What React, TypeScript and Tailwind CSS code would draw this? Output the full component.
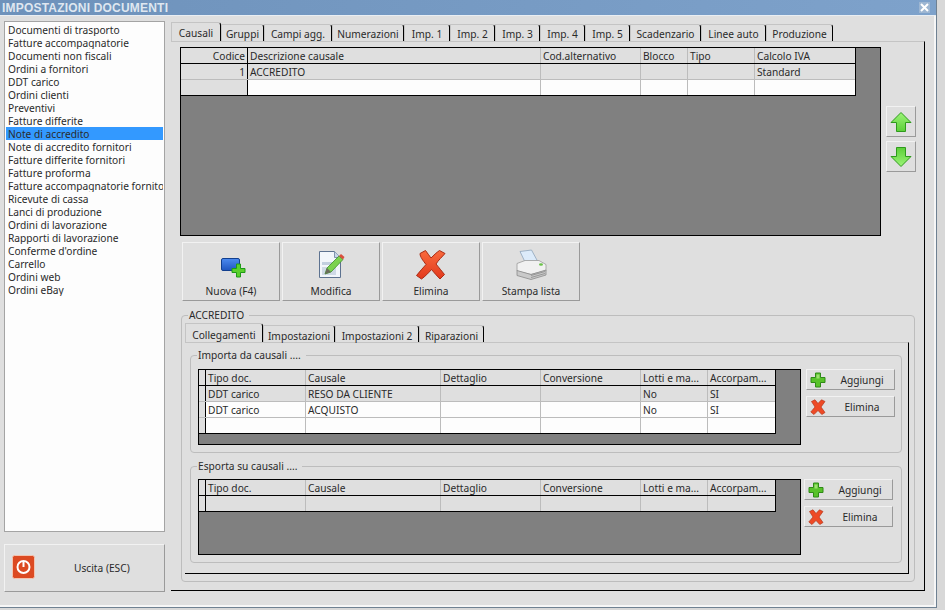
const font = "font-['Noto_Sans',sans-serif]";

const documents = [
  "Documenti di trasporto",
  "Fatture accompagnatorie",
  "Documenti non fiscali",
  "Ordini a fornitori",
  "DDT carico",
  "Ordini clienti",
  "Preventivi",
  "Fatture differite",
  "Note di accredito",
  "Note di accredito fornitori",
  "Fatture differite fornitori",
  "Fatture proforma",
  "Fatture accompagnatorie fornitori",
  "Ricevute di cassa",
  "Lanci di produzione",
  "Ordini di lavorazione",
  "Rapporti di lavorazione",
  "Conferme d'ordine",
  "Carrello",
  "Ordini web",
  "Ordini eBay",
];

const mainTabs = [
  { label: "Causali", width: "w-[50px]" },
  { label: "Gruppi", width: "w-[43px]" },
  { label: "Campi agg.", width: "w-[68px]" },
  { label: "Numerazioni", width: "w-[72px]" },
  { label: "Imp. 1", width: "w-[46px]" },
  { label: "Imp. 2", width: "w-[45px]" },
  { label: "Imp. 3", width: "w-[45px]" },
  { label: "Imp. 4", width: "w-[45px]" },
  { label: "Imp. 5", width: "w-[45px]" },
  { label: "Scadenzario", width: "w-[71px]" },
  { label: "Linee auto", width: "w-[65px]" },
  { label: "Produzione", width: "w-[67px]" },
];

const subTabs = [
  { label: "Collegamenti", width: "w-[78px]" },
  { label: "Impostazioni", width: "w-[72px]" },
  { label: "Impostazioni 2", width: "w-[84px]" },
  { label: "Riparazioni", width: "w-[65px]" },
];

const causaliCols = ["w-[67px]", "w-[293px]", "w-[100px]", "w-[47px]", "w-[67px]", "w-[100px]"];
const linkCols = ["w-[7px]", "w-[100px]", "w-[135px]", "w-[100px]", "w-[100px]", "w-[67px]", "w-[67px]"];
const linkHeader = ["", "Tipo doc.", "Causale", "Dettaglio", "Conversione", "Lotti e ma...", "Accorpam..."];

interface Row {
  cells: string[];
  shaded?: boolean;
}

const Tabs = ({ tabs, leading }: { tabs: { label: string; width: string }[]; leading: string }) => (
  <div className="flex items-end">
    {tabs.map((t, i) => (
      <div
        key={t.label}
        className={`${t.width} flex justify-center border-r border-r-black border-t border-l border-t-[#c4c4c4] border-l-[#c4c4c4] rounded-tr-[3px] ${
          i === 0 ? "h-[19px] pt-[1px]" : "h-[17px]"
        }`}
      >
        <span className={`whitespace-nowrap ${leading}`}>{t.label}</span>
      </div>
    ))}
  </div>
);

const DataGrid = ({
  cols,
  header,
  rows,
  outer,
  stub,
  alignFirst,
}: {
  cols: string[];
  header: string[];
  rows: Row[];
  outer: string;
  stub?: boolean;
  alignFirst?: boolean;
}) => (
  <div className={`${outer} border border-black bg-[#808080] shrink-0`}>
    <div className="w-fit border-r border-b border-black bg-[#dfdfdf]">
      <div className="flex h-[16px] border-b border-black">
        {header.map((h, i) => (
          <div
            key={i}
            className={`${cols[i]} h-[15px] px-[2px] leading-[17px] whitespace-nowrap overflow-hidden ${
              i === 0 && (stub || alignFirst) ? "border-r border-black" : "border-r border-[#bcbcbc]"
            } ${i === 0 && alignFirst ? "text-right" : ""} last:border-r-0`}
          >
            {h}
          </div>
        ))}
      </div>
      {rows.map((row, r) => (
        <div key={r} className="flex h-[16px] border-b border-[#bcbcbc] last:border-b-0 last:h-[15px]">
          {row.cells.map((c, i) => (
            <div
              key={i}
              className={`${cols[i]} h-full px-[2px] leading-[17px] whitespace-nowrap overflow-hidden ${
                i === 0 && (stub || alignFirst) ? "border-r border-black" : "border-r border-[#bcbcbc]"
              } ${row.shaded || i === 0 ? "bg-[#dfdfdf]" : "bg-[#fdfdfd]"} ${
                i === 0 && alignFirst ? "text-right" : ""
              } last:border-r-0`}
            >
              {c}
            </div>
          ))}
        </div>
      ))}
    </div>
  </div>
);

const raised = "border border-t-[#f2f2f2] border-l-[#f2f2f2] border-r-[#9a9a9a] border-b-[#9a9a9a] bg-[#dfdfdf]";

const PlusIcon = () => (
  <svg width="16" height="16" viewBox="0 0 16 16">
    <path d="M5.500 1h5v4.500H15v5h-4.500V15h-5v-4.500H1v-5h4.500z" fill="#58c22a" stroke="#2f8a17" />
    <path d="M6.500 2.500h3v4h-3z" fill="#9be06f" />
  </svg>
);

const SmallCross = () => (
  <svg width="16" height="16" viewBox="0 0 16 16">
    <path
      d="M1.500 2.500 5 .8 8 4.500 11.500.8 15 2.500 11 8l4 5.500L11.800 15.500 8 11.500 4 15.500 .8 13 5 8z"
      fill="#ee4a26"
      stroke="#b5361b"
      strokeWidth="0.7"
    />
  </svg>
);

const SideButton = ({ kind, label }: { kind: "add" | "del"; label: string }) => (
  <div className={`${raised} w-[89px] h-[21px] flex items-center pl-[3px]`}>
    {kind === "add" ? <PlusIcon /> : <SmallCross />}
    <span className="flex-1 text-center pl-[4px] pt-[3px]">{label}</span>
  </div>
);

const ArrowButton = ({ down }: { down?: boolean }) => (
  <div className={`${raised} w-[30px] h-[31px] flex items-center justify-center`}>
    <svg width="22" height="22" viewBox="0 0 22 22" className={down ? "rotate-180" : ""}>
      <defs>
        <linearGradient id="arrowFill" x1="0" y1="0" x2="0" y2="1">
          <stop offset="0" stopColor="#9cf478" />
          <stop offset="1" stopColor="#5ccf38" />
        </linearGradient>
      </defs>
      <path d="M11 1.500 21 11.500h-5.500V20.500h-9V11.500H1z" fill="url(#arrowFill)" stroke="#2e9a1c" />
    </svg>
  </div>
);

const NewIcon = () => (
  <svg width="32" height="32" viewBox="0 0 32 32" className="ml-[2px]">
    <defs>
      <linearGradient id="newBlue" x1="0" y1="0" x2="0" y2="1">
        <stop offset="0" stopColor="#4d8bf0" />
        <stop offset="1" stopColor="#1f56c0" />
      </linearGradient>
    </defs>
    <rect x="5.500" y="9.500" width="18" height="12" rx="1.500" fill="url(#newBlue)" stroke="#123f8e" />
    <path d="M20.500 15h4v4.500H29v4h-4.500V28h-4v-4.500H16v-4h4.500z" fill="#5ad02c" stroke="#1f9a17" />
  </svg>
);

const EditIcon = () => (
  <svg width="32" height="32" viewBox="0 0 32 32">
    <path d="M4.500 2.500h15l6 6v20h-21z" fill="#f2f6fb" stroke="#5d7290" />
    <path d="M19.500 2.500v6h6" fill="#c8d6e8" stroke="#7f93ae" />
    <rect x="7" y="13" width="16" height="3" fill="#c2cfdf" />
    <rect x="7" y="18" width="14" height="8" fill="#cfd9e6" />
    <path d="M10 25l2-6L24 7l4 3.500L16 23z" fill="#7bd24f" stroke="#3f8f2a" strokeWidth="0.8" />
    <path d="M24 7l2-2 3.500 3-1.500 2.500z" fill="#d9503d" />
    <path d="M10 25l2-6 4 4z" fill="#6b6b5c" />
  </svg>
);

const DeleteIcon = () => (
  <svg width="32" height="32" viewBox="0 0 32 32">
    <defs>
      <linearGradient id="delRed" x1="0" y1="0" x2="0" y2="1">
        <stop offset="0" stopColor="#f96a3d" />
        <stop offset="1" stopColor="#e2391d" />
      </linearGradient>
    </defs>
    <path
      d="M5 4.500 10.500 1.500c2 2.500 3.500 5 5.500 7.500 2.500-2.500 5.500-5.500 8.500-7.500L30 4.500c-3 3.500-6.500 6.500-9 10.500 2.500 3.500 6 7 8.500 10.500L25 30c-3-3-6-6.500-8.500-9.500-3 3.500-6.500 7-10 9.500l-5-3.500c3-4 6.500-7.500 9.500-11-3-4-6-7.500-6-11z"
      fill="url(#delRed)"
      stroke="#a92b14"
    />
  </svg>
);

const PrintIcon = () => (
  <svg width="32" height="32" viewBox="0 0 32 32">
    <path d="M5 2.500 16.500 1 23 13 11 15z" fill="#dcebfa" stroke="#8ea4bb" strokeWidth="0.8" />
    <path d="M2 14.500 10 11.500h14l7 4v6l-15 4-14-3.500z" fill="#f1f1f1" stroke="#9a9a9a" strokeWidth="0.8" />
    <path d="M2 21.500v5l14 4 15-4.500v-5l-15 4.500z" fill="#c9c9c9" stroke="#8a8a8a" strokeWidth="0.8" />
    <path d="M16 26.500 30 22.500M16 28.500 30 24.500" stroke="#8a8a8a" strokeWidth="0.8" />
    <ellipse cx="26" cy="15.500" rx="2" ry="1.200" fill="#6cc24a" />
  </svg>
);

const ActionButton = ({ icon, label }: { icon: React.ReactNode; label: string }) => (
  <div className={`${raised} w-[98px] h-[59px] flex flex-col items-center pt-[6px]`}>
    {icon}
    <span className="mt-[3px] leading-[14px]">{label}</span>
  </div>
);

const GroupBox = ({ title, children, box }: { title: string; children: React.ReactNode; box: string }) => (
  <div className={`${box} border border-[#bdbdbd] rounded-[4px]`}>
    <div className="-mt-[9px] ml-[6px] w-fit bg-[#dfdfdf] px-[1px] pr-[5px] leading-[16px]">{title}</div>
    {children}
  </div>
);

export default function App() {
  return (
    <div className={`${font} w-[945px] h-[610px] overflow-hidden bg-[#d8d8d8] text-[10.2px] text-[#2a2a2a]`}>
      <div className="w-[937px] h-[608px] flex flex-col bg-[#dfdfdf] border-r border-b border-r-[#6f8192] border-b-[#6f8192]">
        <div className="h-[16px] shrink-0 flex items-center justify-between pl-[2px] pr-[6px] bg-gradient-to-r from-[#6e92bb] to-[#7ea2cb] border-b border-[#e9eef3]">
          <span className="font-['Liberation_Sans',sans-serif] font-bold text-[12px] text-[#dfe7f0] tracking-[0.2px] leading-[15px] pt-[1px]">
            IMPOSTAZIONI DOCUMENTI
          </span>
          <div className="w-[11px] h-[11px] bg-[#9db6d2] flex items-center justify-center">
            <svg width="9" height="9" viewBox="0 0 9 9">
              <path d="M1 1l7 7M8 1 1 8" stroke="#fff" strokeWidth="2" />
            </svg>
          </div>
        </div>

        <div className="flex-1 flex border-r-2 border-b-2 border-r-[#f6f6f6] border-b-[#f6f6f6]">
          <div className="w-[171px] shrink-0 pl-[4px] pt-[5px]">
            <div className="w-[161px] h-[511px] bg-[#fdfdfd] border border-[#a4a4a4] pt-[1px] pl-[1px] pr-[1px] overflow-hidden">
              {documents.map((d) => (
                <div
                  key={d}
                  className={`h-[13px] leading-[15px] pl-[2px] whitespace-nowrap overflow-hidden ${
                    d === "Note di accredito" ? "bg-[#3399ff]" : ""
                  }`}
                >
                  {d}
                </div>
              ))}
            </div>
            <div className={`${raised} mt-[12px] w-[161px] h-[48px] flex items-center pl-[7px]`}>
              <svg width="23" height="24" viewBox="0 0 23 24" className="-mt-[3px]">
                <rect x="0.500" y="0.500" width="22" height="23" rx="2" fill="#dc4a22" stroke="#f3c4b0" />
                <circle cx="11.500" cy="12" r="6" fill="none" stroke="#fff" strokeWidth="2" />
                <path d="M11.500 6v6" stroke="#fff" strokeWidth="2" />
              </svg>
              <span className="ml-[39px] mt-[2px]">Uscita (ESC)</span>
            </div>
          </div>

          <div className="flex-1 pt-[6px]">
            <Tabs tabs={mainTabs} leading="leading-[18px]" />
            <div className="w-[754px] h-[550px] border-t border-t-[#c4c4c4] border-r border-r-black border-b border-b-black pl-[9px] pt-[5px]">
              <div className="flex">
                <DataGrid
                  outer="w-[701px] h-[189px]"
                  cols={causaliCols}
                  alignFirst
                  header={["Codice", "Descrizione causale", "Cod.alternativo", "Blocco", "Tipo", "Calcolo IVA"]}
                  rows={[
                    { cells: ["1", "ACCREDITO", "", "", "", "Standard"], shaded: true },
                    { cells: ["", "", "", "", "", ""] },
                  ]}
                />
                <div className="ml-[5px] mt-[59px] flex flex-col gap-[4px]">
                  <ArrowButton />
                  <ArrowButton down />
                </div>
              </div>

              <div className="mt-[6px] ml-[2px] flex gap-[2px]">
                <ActionButton icon={<NewIcon />} label="Nuova (F4)" />
                <ActionButton icon={<EditIcon />} label="Modifica" />
                <ActionButton icon={<DeleteIcon />} label="Elimina" />
                <ActionButton icon={<PrintIcon />} label="Stampa lista" />
              </div>

              <GroupBox title="ACCREDITO" box="mt-[14px] ml-[1px] w-[734px] h-[267px]">
                <div className="pl-[3px]">
                  <Tabs tabs={subTabs} leading="leading-[20px]" />
                  <div className="w-[724px] h-[232px] border-t border-t-[#c4c4c4] border-r border-r-black border-b border-b-black pl-[5px] pt-[12px]">
                    <GroupBox title="Importa da causali ...." box="w-[712px] h-[98px]">
                      <div className="flex pl-[7px] pt-[6px]">
                        <DataGrid
                          outer="w-[603px] h-[76px]"
                          cols={linkCols}
                          stub
                          header={linkHeader}
                          rows={[
                            { cells: ["", "DDT carico", "RESO DA CLIENTE", "", "", "No", "SI"], shaded: true },
                            { cells: ["", "DDT carico", "ACQUISTO", "", "", "No", "SI"] },
                            { cells: ["", "", "", "", "", "", ""] },
                          ]}
                        />
                        <div className="ml-[5px] flex flex-col gap-[6px]">
                          <SideButton kind="add" label="Aggiungi" />
                          <SideButton kind="del" label="Elimina" />
                        </div>
                      </div>
                    </GroupBox>
                    <GroupBox title="Esporta su causali ...." box="mt-[13px] w-[712px] h-[97px]">
                      <div className="flex pl-[7px] pt-[5px]">
                        <DataGrid
                          outer="w-[603px] h-[76px]"
                          cols={linkCols}
                          stub
                          header={linkHeader}
                          rows={[{ cells: ["", "", "", "", "", "", ""], shaded: true }]}
                        />
                        <div className="ml-[3px] flex flex-col gap-[6px]">
                          <SideButton kind="add" label="Aggiungi" />
                          <SideButton kind="del" label="Elimina" />
                        </div>
                      </div>
                    </GroupBox>
                  </div>
                </div>
              </GroupBox>
            </div>
          </div>
        </div>
      </div>
    </div>
  );
}
